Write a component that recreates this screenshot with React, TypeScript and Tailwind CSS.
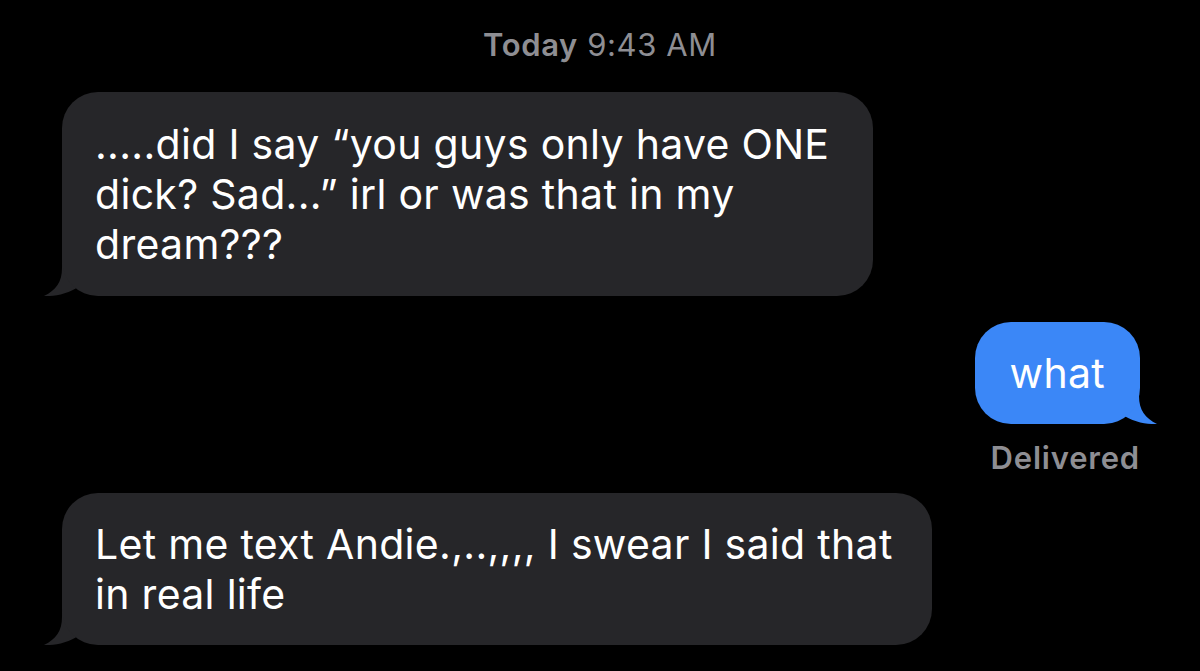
const font = { fontFamily: 'Inter, "Noto Sans", sans-serif' }

function LeftTail() {
  return (
    <svg className="absolute left-[-18px] bottom-0" width="64" height="44" viewBox="0 0 64 44">
      <path d="M18 0 L18 16 C18 30 12 38 0 44 C11 44.5 24 42 36 34 C42 40 52 44 64 44 L64 0 Z" fill="#262629" />
    </svg>
  )
}

function RightTail() {
  return (
    <svg className="absolute right-[-17px] bottom-0" width="64" height="44" viewBox="0 0 64 44">
      <path d="M46 0 L46 16 C46 30 52 38 64 44 C53 44.5 40 42 28 34 C22 40 12 44 0 44 L0 0 Z" fill="#3b87f7" />
    </svg>
  )
}

export default function App() {
  return (
    <div className="w-[1200px] h-[671px] bg-black overflow-hidden flex flex-col" style={font}>
      <div className="pt-[29px] text-center text-[31px] leading-[32px] tracking-[0.6px] text-[#8e8e93]">
        <span className="font-semibold">Today</span> 9:43 AM
      </div>

      <div className="mt-[31px] ml-[62px] relative w-[811px]">
        <LeftTail />
        <div className="relative rounded-[36px] bg-[#262629] pl-[33px] pr-[20px] py-[27px] text-white text-[41px] leading-[50px] tracking-[0.3px]">
          .....did I say “you guys only have ONE<br />
          dick? Sad...” irl or was that in my<br />
          dream???
        </div>
      </div>

      <div className="mt-[26px] mr-[60px] self-end relative">
        <RightTail />
        <div className="relative rounded-[36px] bg-[#3b87f7] px-[35px] py-[26px] text-white text-[41px] leading-[50px] tracking-[0.3px]">
          what
        </div>
      </div>

      <div className="self-end mr-[60px] mt-[18px] text-[31px] leading-[32px] tracking-[0.8px] font-semibold text-[#8e8e93]">
        Delivered
      </div>

      <div className="mt-[19px] ml-[62px] relative w-[870px]">
        <LeftTail />
        <div className="relative rounded-[36px] bg-[#262629] pl-[33px] pr-[20px] py-[26px] text-white text-[41px] leading-[50px] tracking-[0.3px]">
          Let me text Andie.,..,,,, I swear I said that<br />
          in real life
        </div>
      </div>
    </div>
  )
}
